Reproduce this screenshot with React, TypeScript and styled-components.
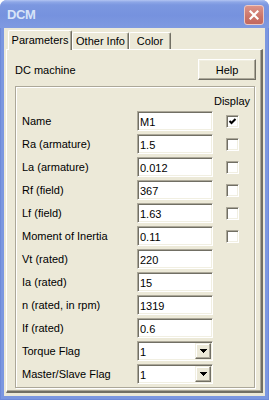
import React from "react";
import styled, { createGlobalStyle } from "styled-components";

const GlobalStyle = createGlobalStyle`
  html, body {
    margin: 0;
    padding: 0;
    background: #ffffff;
  }
  body {
    font-family: "Liberation Sans", Arial, sans-serif;
    font-size: 11px;
    color: #000;
  }
`;

const Window = styled.div`
  width: 269px;
  height: 400px;
  display: flex;
  flex-direction: column;
  border-radius: 7px 7px 0 0;
  overflow: hidden;
  background: #7b97e0;
`;

const TitleBar = styled.div`
  height: 28px;
  flex: none;
  display: flex;
  align-items: center;
  justify-content: space-between;
  padding: 0 5px 0 7px;
  background: linear-gradient(#b3c5f2 0, #8ea7e7 2px, #7b97e0 5px, #7692de 55%, #7f9ae1 100%);
`;

const Title = styled.span`
  font-family: "Liberation Sans", Arial, sans-serif;
  font-weight: bold;
  font-size: 13px;
  letter-spacing: -0.4px;
  color: #d8e4f8;
  padding-top: 1px;
`;

const CloseButton = styled.div`
  width: 20px;
  height: 20px;
  box-sizing: border-box;
  border: 1px solid #ecc8c2;
  border-radius: 3px;
  background: linear-gradient(#dc948a, #cb7469 60%, #c2685e);
  display: flex;
  align-items: center;
  justify-content: center;
  margin-top: 1px;
`;

const Frame = styled.div`
  flex: 1;
  display: flex;
  padding: 0 4px 4px 4px;
  background: #7b97e0;
  box-shadow: inset 1px 0 #6e8ad9, inset -1px 0 #6e8ad9, inset 0 -1px #6e8ad9;
`;

const Content = styled.div`
  flex: 1;
  display: flex;
  flex-direction: column;
  padding: 0 2px 3px 2px;
  background: #ece9d8;
`;

const TabStrip = styled.div`
  height: 21px;
  flex: none;
  display: flex;
  align-items: flex-end;
  padding-left: 2px;
  position: relative;
  z-index: 1;
`;

const Tab = styled.div<{ $active?: boolean; $w: number }>`
  width: ${(p) => p.$w}px;
  height: ${(p) => (p.$active ? 20 : 17)}px;
  margin-bottom: ${(p) => (p.$active ? -1 : 0)}px;
  padding-bottom: ${(p) => (p.$active ? 1 : 0)}px;
  box-sizing: border-box;
  display: flex;
  align-items: center;
  justify-content: center;
  background: #ece9d8;
  border-top: 1px solid #ffffff;
  border-left: 1px solid #ffffff;
  border-right: 1px solid #716f64;
  border-radius: 2px 2px 0 0;
  box-shadow: inset -1px 0 #aca899;
`;

const Panel = styled.div`
  flex: 1;
  display: flex;
  flex-direction: column;
  padding: 9px 5px 0 8px;
  border: 1px solid;
  border-color: #ffffff #716f64 #716f64 #ffffff;
  border-width: 1px 2px 2px 1px;
  box-shadow: inset -1px -1px #aca899;
`;

const HeaderRow = styled.div`
  display: flex;
  align-items: center;
  justify-content: space-between;
  height: 21px;
`;

const HelpButton = styled.div`
  width: 58px;
  height: 21px;
  box-sizing: border-box;
  display: flex;
  align-items: center;
  justify-content: center;
  background: #ece9d8;
  border: 1px solid;
  border-color: #ffffff #716f64 #716f64 #ffffff;
  box-shadow: inset -1px -1px #aca899, inset 1px 1px #f1efe2;
`;

const GroupBox = styled.div`
  margin-top: 6px;
  margin-right: 1px;
  padding: 6px 3px 3px 6px;
  border: 1px solid #aca899;
  box-shadow: inset 1px 1px #ffffff, 1px 1px #ffffff;
  display: grid;
  grid-template-columns: 1fr 76px 38px;
  grid-template-rows: 15px;
  grid-auto-rows: 20px;
  row-gap: 3px;
  align-items: center;
`;

const DisplayHead = styled.span`
  grid-column: 3;
  justify-self: center;
`;

const Label = styled.span`
  grid-column: 1;
  white-space: nowrap;
`;

const Field = styled.div`
  grid-column: 2;
  width: 76px;
  height: 20px;
  box-sizing: border-box;
  display: flex;
  align-items: center;
  padding: 0 2px 0 2px;
  background: #ffffff;
  border: 1px solid;
  border-color: #aca899 #ffffff #ffffff #aca899;
  box-shadow: inset 1px 1px #716f64, inset -1px -1px #f1efe2;
`;

const FieldText = styled.span`
  flex: 1;
  padding-top: 1px;
`;

const DropButton = styled.div`
  width: 16px;
  height: 16px;
  box-sizing: border-box;
  margin-right: -1px;
  display: flex;
  align-items: center;
  justify-content: center;
  background: #ece9d8;
  border: 1px solid;
  border-color: #f1efe2 #716f64 #716f64 #f1efe2;
  box-shadow: inset -1px -1px #aca899, inset 1px 1px #ffffff;
`;

const Check = styled.div`
  grid-column: 3;
  justify-self: center;
  width: 13px;
  height: 13px;
  box-sizing: border-box;
  background: #ffffff;
  border: 1px solid;
  border-color: #aca899 #ffffff #ffffff #aca899;
  box-shadow: inset 1px 1px #716f64, inset -1px -1px #f1efe2;
  display: flex;
  align-items: center;
  justify-content: center;
`;

type Row = {
  label: string;
  value: string;
  kind?: "text" | "combo";
  check?: "on" | "off";
};

const rows: Row[] = [
  { label: "Name", value: "M1", check: "on" },
  { label: "Ra (armature)", value: "1.5", check: "off" },
  { label: "La (armature)", value: "0.012", check: "off" },
  { label: "Rf (field)", value: "367", check: "off" },
  { label: "Lf (field)", value: "1.63", check: "off" },
  { label: "Moment of Inertia", value: "0.11", check: "off" },
  { label: "Vt (rated)", value: "220" },
  { label: "Ia (rated)", value: "15" },
  { label: "n (rated, in rpm)", value: "1319" },
  { label: "If (rated)", value: "0.6" },
  { label: "Torque Flag", value: "1", kind: "combo" },
  { label: "Master/Slave Flag", value: "1", kind: "combo" },
];

const CloseIcon = () => (
  <svg width="10" height="10" viewBox="0 0 10 10">
    <path d="M1.5 1.5 L8.5 8.5 M8.5 1.5 L1.5 8.5" stroke="#ffffff" strokeWidth="2.2" strokeLinecap="square" />
  </svg>
);

const CheckMark = () => (
  <svg width="9" height="9" viewBox="0 0 9 9">
    <polyline points="1.5,4 3.5,6 7.5,2" fill="none" stroke="#000" strokeWidth="2" />
  </svg>
);

const Arrow = () => (
  <svg width="7" height="4" viewBox="0 0 7 4" shapeRendering="crispEdges">
    <polygon points="0,0 7,0 3.5,4" fill="#000" />
  </svg>
);

export default function App() {
  return (
    <>
      <GlobalStyle />
      <Window>
        <TitleBar>
          <Title>DCM</Title>
          <CloseButton>
            <CloseIcon />
          </CloseButton>
        </TitleBar>
        <Frame>
          <Content>
            <TabStrip>
              <Tab $active $w={64}>Parameters</Tab>
              <Tab $w={57}>Other Info</Tab>
              <Tab $w={42}>Color</Tab>
            </TabStrip>
            <Panel>
              <HeaderRow>
                <span>DC machine</span>
                <HelpButton>Help</HelpButton>
              </HeaderRow>
              <GroupBox>
                <DisplayHead>Display</DisplayHead>
                {rows.map((r) => (
                  <React.Fragment key={r.label}>
                    <Label>{r.label}</Label>
                    <Field>
                      <FieldText>{r.value}</FieldText>
                      {r.kind === "combo" && (
                        <DropButton>
                          <Arrow />
                        </DropButton>
                      )}
                    </Field>
                    {r.check && <Check>{r.check === "on" && <CheckMark />}</Check>}
                  </React.Fragment>
                ))}
              </GroupBox>
            </Panel>
          </Content>
        </Frame>
      </Window>
    </>
  );
}
